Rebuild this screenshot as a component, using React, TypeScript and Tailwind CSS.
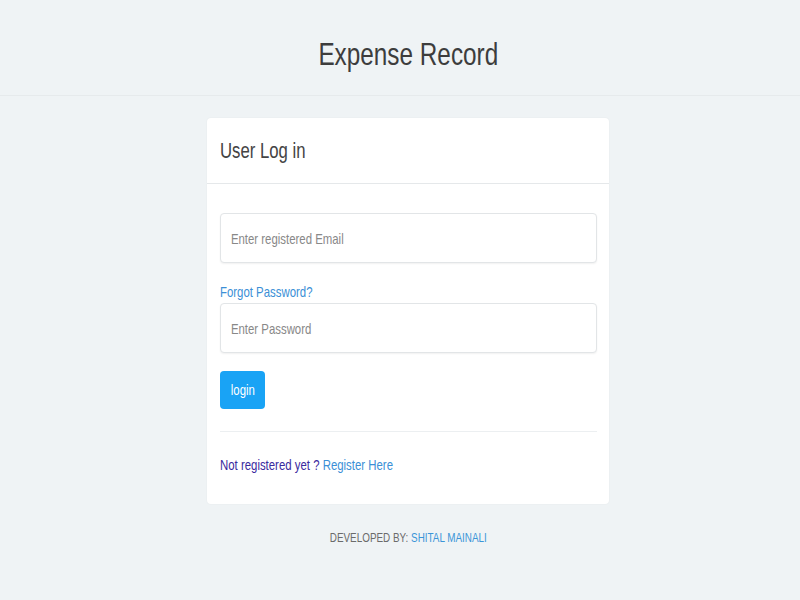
import type { ReactNode } from 'react';

const font = { fontFamily: '"Liberation Sans", Arial, sans-serif' };

// text in the shot is squeezed sideways, so narrow each run of text
const Narrow = ({ children, center }: { children: ReactNode; center?: boolean }) => (
  <span className={`inline-block whitespace-nowrap scale-x-[0.76] ${center ? 'origin-center' : 'origin-left'}`}>
    {children}
  </span>
);

const Field = ({ type, placeholder }: { type: string; placeholder: string }) => (
  <div className="w-full h-[50px] overflow-hidden border border-[#e2e5e7] rounded-[4px] shadow-[0_1px_2px_rgba(0,0,0,0.06)] bg-white">
    <input
      type={type}
      placeholder={placeholder}
      className="w-[131.5%] h-full px-[13px] text-[15px] bg-transparent origin-left scale-x-[0.76] placeholder:text-[#888] outline-none"
    />
  </div>
);

const App = () => {
  return (
    <div className="min-h-[600px] w-full bg-[#eff3f5] text-[#444]" style={font}>
      <header className="h-[96px] border-b border-[#e6eaec] flex items-center justify-center pl-[16px]">
        <h1 className="text-[32px] text-[#3d3d3d] mt-[12px]">
          <Narrow center>Expense Record</Narrow>
        </h1>
      </header>

      <div className="flex justify-center pt-[22px] pl-[16px]">
        <div className="w-[402px] bg-white rounded-[4px] shadow-[0_0_2px_rgba(0,0,0,0.06)]">
          <div className="h-[66px] border-b border-[#e5e8ea] flex items-center px-[13px]">
            <h2 className="text-[22px] text-[#444]">
              <Narrow>User Log in</Narrow>
            </h2>
          </div>

          <form className="pl-[13px] pr-[12px] pt-[29px] pb-[30px]">
            <Field type="email" placeholder="Enter registered Email" />
            <a href="#" className="block mt-[20px] text-[15px] text-[#3b8fd6] leading-[18px]">
              <Narrow>Forgot Password?</Narrow>
            </a>
            <div className="mt-[2px]">
              <Field type="password" placeholder="Enter Password" />
            </div>
            <button
              type="button"
              className="mt-[18px] w-[45px] h-[38px] rounded-[4px] bg-[#19a3f5] text-white text-[15px] flex items-center justify-center"
            >
              <Narrow center>login</Narrow>
            </button>
            <hr className="mt-[22px] border-[#eceff1]" />
            <p className="mt-[24px] text-[15px] text-[#3a2a9e] leading-[18px]">
              <Narrow>
                Not registered yet ?{' '}
                <a href="#" className="text-[#3b8fd6]">
                  Register Here
                </a>
              </Narrow>
            </p>
          </form>
        </div>
      </div>

      <footer className="text-center mt-[24px] text-[13px] text-[#6b6b6b] pl-[16px]">
        <Narrow center>
          DEVELOPED BY: <a href="#" className="text-[#3b95d8]">SHITAL MAINALI</a>
        </Narrow>
      </footer>
    </div>
  );
};

export default App;
